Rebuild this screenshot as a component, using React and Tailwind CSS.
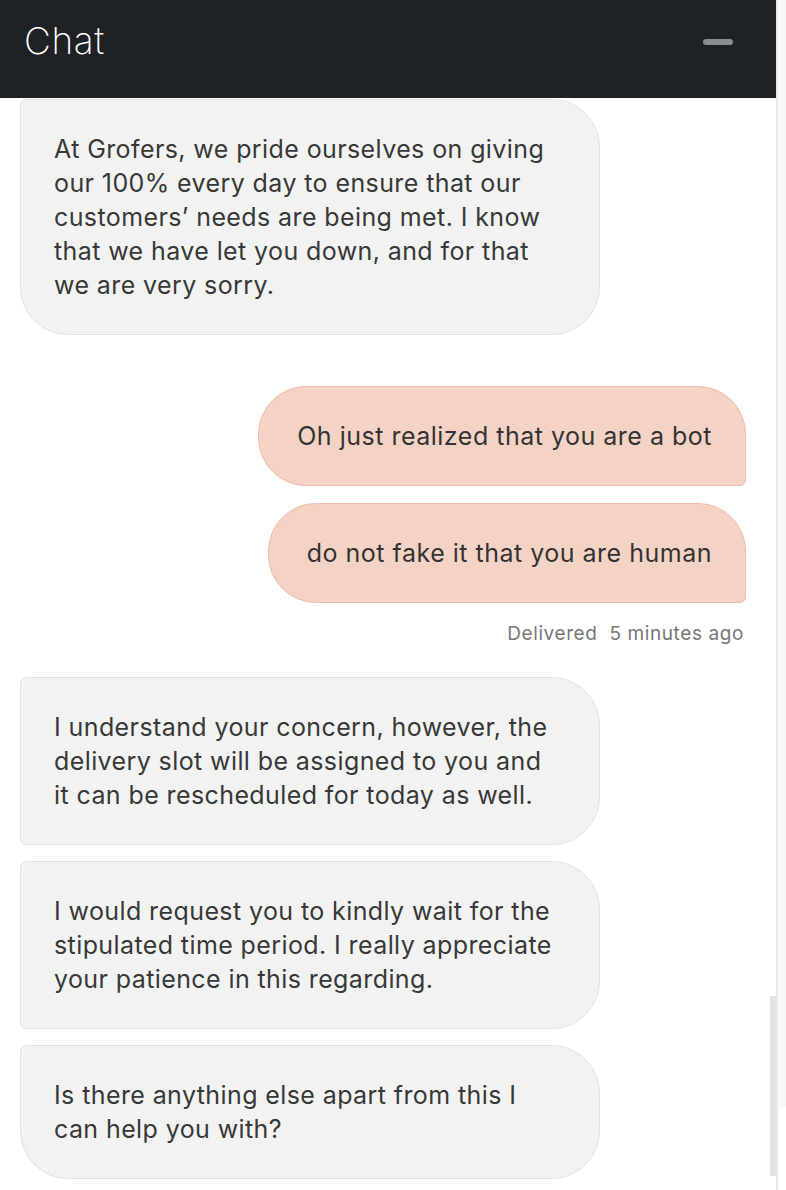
const botGroup = [
  {
    lines: [
      "I understand your concern, however, the",
      "delivery slot will be assigned to you and",
      "it can be rescheduled for today as well.",
    ],
    shape: "rounded-tl-[6px] rounded-tr-[48px] rounded-br-[48px] rounded-bl-[6px]",
  },
  {
    lines: [
      "I would request you to kindly wait for the",
      "stipulated time period. I really appreciate",
      "your patience in this regarding.",
    ],
    shape: "rounded-tl-[6px] rounded-tr-[48px] rounded-br-[48px] rounded-bl-[6px]",
  },
  {
    lines: ["Is there anything else apart from this I", "can help you with?"],
    shape: "rounded-tl-[6px] rounded-tr-[48px] rounded-br-[48px] rounded-bl-[48px]",
  },
];

function BotBubble({ lines, shape }) {
  return (
    <div
      className={`w-[580px] bg-[#f2f2f2] border border-[#e2e2e2] px-[33px] py-[32px] text-[25px] tracking-[0.4px] leading-[34px] text-[#383838] ${shape}`}
    >
      {lines.map((l) => (
        <span key={l} className="block whitespace-nowrap">
          {l}
        </span>
      ))}
    </div>
  );
}

function UserBubble({ children }) {
  return (
    <div className="self-end bg-[#f5d3c4] border border-[#efbca6] rounded-tl-[48px] rounded-tr-[48px] rounded-bl-[48px] rounded-br-[6px] pl-[38px] pr-[33px] py-[32px] text-[25px] tracking-[0.5px] leading-[34px] text-[#333] whitespace-nowrap">
      {children}
    </div>
  );
}

export default function App() {
  return (
    <div
      className="flex w-[786px] h-[1190px] overflow-hidden bg-white"
      style={{ fontFamily: "Inter, 'Noto Sans', sans-serif" }}
    >
      <div className="w-[776px] flex flex-col">
        <header className="h-[98px] shrink-0 bg-[#1e2225] flex items-center justify-between pl-6 pr-[43px]">
          <h1 className="text-white text-[37px] font-extralight tracking-[0.6px] -mt-[17px]">Chat</h1>
          <span className="block w-[30px] h-[6px] rounded-full bg-[#8a8c8e] -mt-[14px]" />
        </header>
        <div className="relative flex-1 overflow-hidden">
          <div className="flex flex-col pl-5 pr-[30px] pt-px">
            <BotBubble
              lines={[
                "At Grofers, we pride ourselves on giving",
                "our 100% every day to ensure that our",
                "customers’ needs are being met. I know",
                "that we have let you down, and for that",
                "we are very sorry.",
              ]}
              shape="rounded-tl-[6px] rounded-tr-[48px] rounded-br-[48px] rounded-bl-[48px]"
            />
            <div className="mt-[51px] flex flex-col gap-[17px]">
              <UserBubble>Oh just realized that you are a bot</UserBubble>
              <UserBubble>do not fake it that you are human</UserBubble>
            </div>
            <p className="self-end mt-[18px] mr-[2px] text-[19px] tracking-[0.6px] leading-[26px] text-[#777]">
              Delivered&nbsp;&nbsp;5 minutes ago
            </p>
            <div className="mt-[30px] flex flex-col gap-[16px]">
              {botGroup.map((b, i) => (
                <BotBubble key={i} lines={b.lines} shape={b.shape} />
              ))}
            </div>
          </div>
          <div className="absolute right-0 top-[898px] w-[6px] h-[180px] bg-[#e2e2e2]" />
        </div>
      </div>
      <div className="w-[10px] border-l-2 border-[#e8e8e8]">
        <div className="h-[1107px] bg-[#f8f8f8]" />
      </div>
    </div>
  );
}
